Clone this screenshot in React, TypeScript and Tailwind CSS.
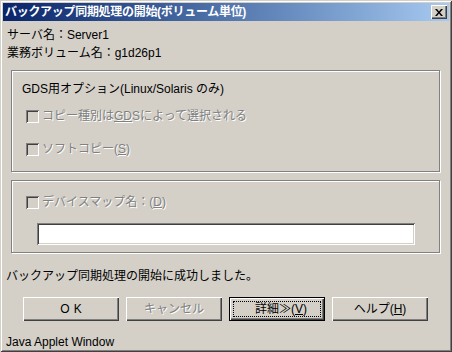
import React from "react";

const font = "font-['Liberation_Sans','Noto_Sans_CJK_JP',sans-serif]";
const disabled = "text-[#808080] [text-shadow:1px_1px_0_#fff]";

function Checkbox() {
  return (
    <div className="w-[13px] h-[13px] bg-[#d4d0c8] shadow-[inset_1px_1px_0_#808080,inset_-1px_-1px_0_#fff,inset_2px_2px_0_#404040,inset_-2px_-2px_0_#d4d0c8] shrink-0" />
  );
}

function Btn({ children, dis, focus }: { children: React.ReactNode; dis?: boolean; focus?: boolean }) {
  if (focus) {
    return (
      <div className="w-[96px] h-[24px] border border-black flex">
        <div className="flex-1 shadow-[inset_1px_1px_0_#fff,inset_-1px_-1px_0_#404040,inset_-2px_-2px_0_#808080] p-[3px] flex">
          <div className="flex-1 border border-dotted border-black flex items-center justify-center text-[12px] leading-none">
            {children}
          </div>
        </div>
      </div>
    );
  }
  return (
    <div
      className={`w-[96px] h-[24px] flex items-center justify-center text-[12px] leading-none shadow-[inset_1px_1px_0_#fff,inset_-1px_-1px_0_#404040,inset_-2px_-2px_0_#808080] ${dis ? disabled : "text-black"}`}
    >
      {children}
    </div>
  );
}

export default function App() {
  return (
    <div
      className={`w-[452px] h-[352px] overflow-hidden bg-[#d4d0c8] ${font} text-[12px] text-black flex flex-col p-[3px] pb-0 shadow-[inset_1px_1px_0_#d4d0c8,inset_-1px_-1px_0_#404040,inset_2px_2px_0_#fff,inset_-2px_-2px_0_#808080]`}
    >
      {/* Title bar */}
      <div className="shrink-0 h-[18px] bg-gradient-to-r from-[#0a246a] to-[#a6caf0] flex items-center justify-between pl-[2px] pr-[2px]">
        <span className="text-white font-bold text-[12px] leading-none tracking-[-0.3px]">
          バックアップ同期処理の開始(ボリューム単位)
        </span>
        <div className="w-[16px] h-[14px] bg-[#d4d0c8] shadow-[inset_1px_1px_0_#fff,inset_-1px_-1px_0_#404040,inset_-2px_-2px_0_#808080] flex items-center justify-center">
          <svg width="8" height="7" viewBox="0 0 8 7">
            <path d="M0 0h2l2 2.5L6 0h2L5 3.5 8 7H6L4 4.5 2 7H0l3-3.5z" fill="#000" />
          </svg>
        </div>
      </div>

      {/* Info lines */}
      <div className="shrink-0 pl-[4px] mt-[5px] leading-[18px]">
        <div>サーバ名：Server1</div>
        <div>業務ボリューム名：g1d26p1</div>
      </div>

      {/* Group 1 */}
      <div className="shrink-0 ml-[8px] mt-[8px] w-[429px] h-[102px] border border-[#808080] shadow-[inset_1px_1px_0_#fff,1px_1px_0_#fff] flex flex-col">
        <div className="pl-[10px] mt-[10px] leading-[16px]">GDS用オプション(Linux/Solaris のみ)</div>
        <div className="ml-[14px] mt-[11px] flex items-center gap-[3px] leading-[16px]">
          <Checkbox />
          <span className={disabled}>
            コピー種別は<span className="underline">GD</span>Sによって選択される
          </span>
        </div>
        <div className="ml-[14px] mt-[17px] flex items-center gap-[3px] leading-[16px]">
          <Checkbox />
          <span className={disabled}>
            ソフトコピー(<span className="underline">S</span>)
          </span>
        </div>
      </div>

      {/* Group 2 */}
      <div className="shrink-0 ml-[8px] mt-[8px] w-[429px] h-[73px] border border-[#808080] shadow-[inset_1px_1px_0_#fff,1px_1px_0_#fff] flex flex-col">
        <div className="ml-[14px] mt-[13px] flex items-center gap-[3px] leading-[16px]">
          <Checkbox />
          <span className={disabled}>
            デバイスマップ名：(<span className="underline">D</span>)
          </span>
        </div>
        <div className="ml-[25px] mt-[13px] w-[378px] h-[22px] bg-white shadow-[inset_1px_1px_0_#808080,inset_-1px_-1px_0_#fff,inset_2px_2px_0_#404040,inset_-2px_-2px_0_#d4d0c8]" />
      </div>

      {/* Message */}
      <div className="shrink-0 pl-[3px] mt-[14px] leading-[18px]">バックアップ同期処理の開始に成功しました。</div>

      {/* Buttons */}
      <div className="shrink-0 ml-[20px] mt-[12px] flex gap-[7px]">
        <Btn>
          <span className="tracking-[4px] pl-[4px]">OK</span>
        </Btn>
        <Btn dis>キャンセル</Btn>
        <Btn focus>
          <span className="pl-[8px]">
            詳細≫(<span className="underline">V</span>)
          </span>
        </Btn>
        <Btn>
          ヘルプ(<span className="underline">H</span>)
        </Btn>
      </div>

      {/* Footer */}
      <div className="shrink-0 pl-[3px] mt-[13px] leading-[16px]">Java Applet Window</div>
    </div>
  );
}
